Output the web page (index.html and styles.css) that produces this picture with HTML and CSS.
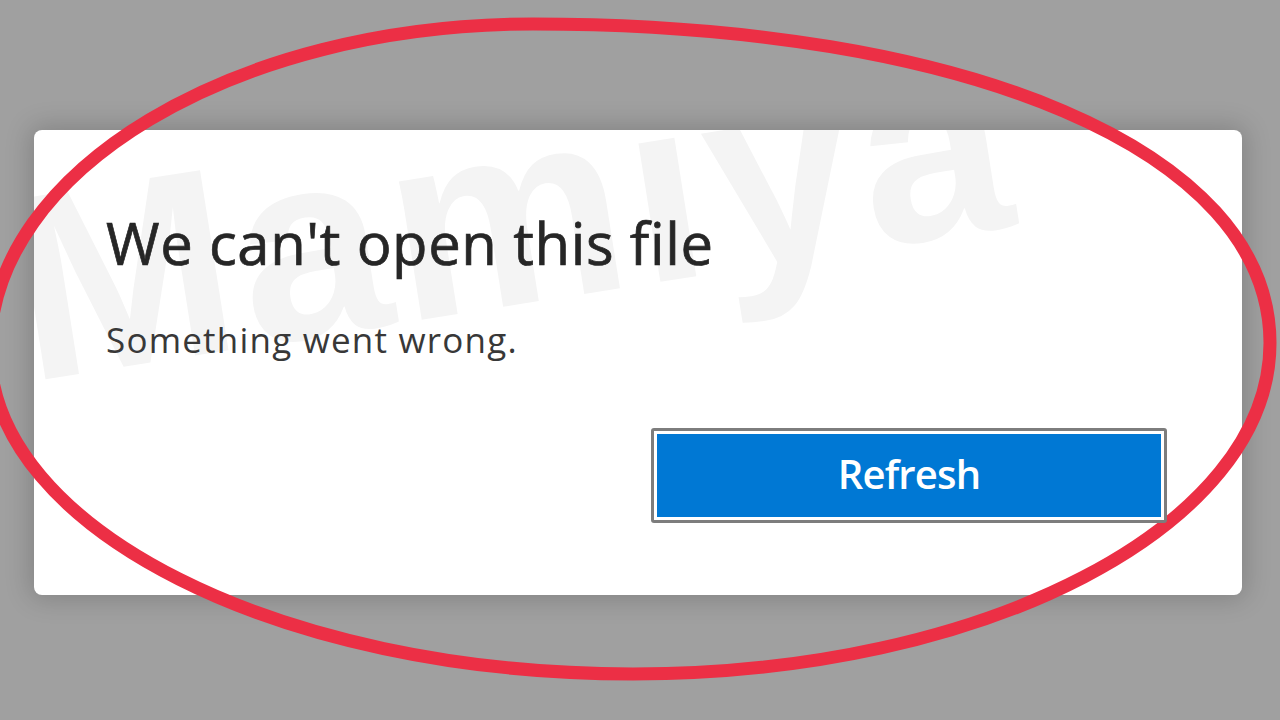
FILE: index.html
```html
<!DOCTYPE html>
<html lang="en">
<head>
<meta charset="utf-8">
<title>We can't open this file</title>
<link rel="stylesheet" href="styles.css">
</head>
<body>
<div class="stage">
  <div class="card">
    <div class="watermark" aria-hidden="true">Mamiya</div>
    <h1 class="title">We can't open this file</h1>
    <p class="message">Something went wrong.</p>
    <div class="actions">
      <button class="btn">Refresh</button>
    </div>
  </div>
</div>
<svg class="circle" width="1280" height="720" viewBox="0 0 1280 720">
  <path d="M533 24 C965 24 1270 150 1270 343 C1270 526 985 674 633 674 C280 674 -10 529 -10 350 C-10 170 235 24 533 24 Z" fill="none" stroke="#ec2f45" stroke-width="13"/>
</svg>
</body>
</html>
```

FILE: styles.css
```css
html, body {
  margin: 0;
  padding: 0;
}
body {
  width: 1280px;
  height: 720px;
  overflow: hidden;
  background: #a0a0a0;
  position: relative;
  font-family: "Open Sans", "Noto Sans", "Liberation Sans", sans-serif;
}
.stage {
  padding: 130px 38px 0 34px;
}
.card {
  position: relative;
  overflow: hidden;
  width: 1208px;
  height: 465px;
  box-sizing: border-box;
  background: #ffffff;
  border-radius: 8px;
  box-shadow: 0 0 26px 4px rgba(0, 0, 0, 0.18);
  padding: 77px 75px 0 72px;
  display: flex;
  flex-direction: column;
}
.watermark {
  position: absolute;
  left: -6px;
  top: 28px;
  font-family: "Liberation Sans", Arial, sans-serif;
  font-weight: 700;
  font-size: 265px;
  line-height: 1;
  letter-spacing: 6px;
  color: #f4f4f4;
  transform: rotate(-9deg);
  transform-origin: 0 224px;
  white-space: nowrap;
  z-index: 0;
}
.title, .message, .actions {
  position: relative;
  z-index: 1;
}
.title {
  margin: 0;
  font-size: 58px;
  font-weight: 400;
  line-height: 72px;
  color: #262626;
  letter-spacing: 0.6px;
  -webkit-text-stroke: 0.7px #262626;
}
.message {
  margin: 41px 0 0 0;
  font-size: 35px;
  line-height: 40px;
  color: #383838;
  letter-spacing: 1.2px;
}
.actions {
  display: flex;
  justify-content: flex-end;
  margin-top: 68px;
}
.btn {
  width: 516px;
  height: 95px;
  box-sizing: border-box;
  border: 3px solid #7d7d7d;
  border-radius: 3px;
  background: #0078d4;
  box-shadow: inset 0 0 0 3px #ffffff;
  color: #ffffff;
  font-family: "Open Sans", "Noto Sans", sans-serif;
  font-size: 40px;
  font-weight: 600;
  letter-spacing: -0.8px;
  padding: 0 0 4px 0;
}
.circle {
  position: absolute;
  left: 0;
  top: 0;
  pointer-events: none;
}
```
